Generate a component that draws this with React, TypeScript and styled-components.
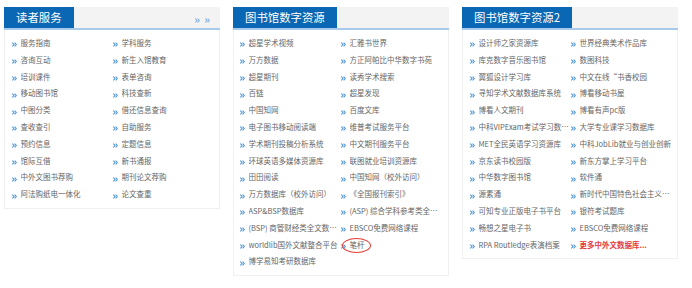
import styled, { createGlobalStyle } from 'styled-components';

const GlobalStyle = createGlobalStyle`
  html, body {
    margin: 0;
    padding: 0;
    background: #fff;
  }
  body {
    font-family: "Noto Sans CJK SC", "Noto Sans", sans-serif;
  }
`;

const Page = styled.div`
  display: flex;
  align-items: flex-start;
  gap: 13px;
  padding: 7px 0 0 4px;
`;

const Panel = styled.div`
  width: 216px;
  box-sizing: border-box;
  background: #fff;
  border: 1px solid #f0f0f0;
  border-top: none;
`;

const PanelHead = styled.div`
  display: flex;
  align-items: center;
  justify-content: space-between;
  height: 21px;
  background: #f3f3f3;
  border-bottom: 2px solid #a8cbeb;
  margin: 0 -1px;
`;

const HeadTitle = styled.div`
  height: 21px;
  line-height: 21px;
  padding: 0 12px;
  background: #0a67b3;
  color: #fff;
  font-size: 11.4px;
  white-space: nowrap;
`;

const MoreLink = styled.span`
  display: flex;
  gap: 1px;
  margin-right: 7px;
  margin-top: 2px;
`;

const List = styled.div`
  display: grid;
  grid-template-columns: 101px 101px;
  padding: 5px 0 5px ${(p: { $indent: number }) => p.$indent}px;
`;

const Item = styled.div`
  display: flex;
  align-items: center;
  height: 16.8px;
  min-width: 0;
`;

const Bullet = styled.svg`
  flex: none;
  width: 5px;
  height: 5px;
  margin: 3px 3.5px 0 0;
`;

const Label = styled.span<{ $red?: boolean }>`
  position: relative;
  min-width: 0;
  overflow: ${(p) => (p.$red === undefined ? 'hidden' : 'visible')};
  text-overflow: ellipsis;
  white-space: nowrap;
  font-size: 7.5px;
  line-height: 16.8px;
  color: ${(p) => (p.$red ? '#e4393c' : '#666')};
  font-weight: ${(p) => (p.$red ? 700 : 400)};
`;

const Circle = styled.span`
  position: absolute;
  left: -8px;
  right: -6px;
  top: 1px;
  height: 13px;
  border: 1.4px solid #e53b32;
  border-radius: 50%;
  pointer-events: none;
`;

const Arrows = ({ color = '#4c95d6' }: { color?: string }) => (
  <Bullet viewBox="0 0 5 5">
    <path d="M0.3 0.6 L2 2.5 L0.3 4.4" fill="none" stroke={color} strokeWidth="1.1" />
    <path d="M2.6 0.6 L4.3 2.5 L2.6 4.4" fill="none" stroke={color} strokeWidth="1.1" />
  </Bullet>
);

type Entry = { text: string; red?: boolean; circled?: boolean };

const readerItems: Entry[] = [
  '服务指南', '学科服务', '咨询互动', '新生入馆教育', '培训课件', '表单咨询',
  '移动图书馆', '科技查新', '中图分类', '借还信息查询', '查收查引', '自助服务',
  '预约信息', '定题信息', '馆际互借', '新书通报', '中外文图书荐购', '期刊论文荐购',
  '阿法购纸电一体化', '论文查重',
].map((text) => ({ text }));

const digitalItems: Entry[] = [
  { text: '超星学术视频' }, { text: '汇雅书世界' },
  { text: '万方数据' }, { text: '方正阿帕比中华数字书苑' },
  { text: '超星期刊' }, { text: '读秀学术搜索' },
  { text: '百链' }, { text: '超星发现' },
  { text: '中国知网' }, { text: '百度文库' },
  { text: '电子图书移动阅读端' }, { text: '维普考试服务平台' },
  { text: '学术期刊投稿分析系统' }, { text: '中文期刊服务平台' },
  { text: '环球英语多媒体资源库' }, { text: '联图就业培训资源库' },
  { text: '田田阅读' }, { text: '中国知网（校外访问）' },
  { text: '万方数据库（校外访问）' }, { text: '《全国报刊索引》' },
  { text: 'ASP&BSP数据库' }, { text: '(ASP) 综合学科参考类全文数据库' },
  { text: '(BSP) 商管财经类全文数据库' }, { text: 'EBSCO免费网络课程' },
  { text: 'worldlib国外文献整合平台' }, { text: '笔杆', circled: true },
  { text: '博学易知考研数据库' },
];

const digital2Items: Entry[] = [
  { text: '设计师之家资源库' }, { text: '世界经典美术作品库' },
  { text: '库克数字音乐图书馆' }, { text: '数图科技' },
  { text: '翼狐设计学习库' }, { text: '中文在线“书香校园' },
  { text: '寻知学术文献数据库系统' }, { text: '博看移动书屋' },
  { text: '博看人文期刊' }, { text: '博看有声pc版' },
  { text: '中科VIPExam考试学习数据库' }, { text: '大学专业课学习数据库' },
  { text: 'MET全民英语学习资源库' }, { text: '中科JobLib就业与创业创新' },
  { text: '京东读书校园版' }, { text: '新东方掌上学习平台' },
  { text: '中华数字图书馆' }, { text: '软件通' },
  { text: '源素通' }, { text: '新时代中国特色社会主义思想' },
  { text: '可知专业正版电子书平台' }, { text: '银符考试题库' },
  { text: '畅想之星电子书' }, { text: 'EBSCO免费网络课程' },
  { text: 'RPA Routledge表演档案' }, { text: '更多中外文数据库...', red: true },
];

const ResourcePanel = ({
  title,
  items,
  indent,
  more,
}: {
  title: string;
  items: Entry[];
  indent: number;
  more?: boolean;
}) => (
  <Panel>
    <PanelHead>
      <HeadTitle>{title}</HeadTitle>
      {more ? (
        <MoreLink>
          <Arrows color="#7fb0de" />
          <Arrows color="#7fb0de" />
        </MoreLink>
      ) : null}
    </PanelHead>
    <List $indent={indent}>
      {items.map((it, i) => (
        <Item key={i}>
          <Arrows />
          {it.circled ? (
            <Label $red={false}>
              {it.text}
              <Circle />
            </Label>
          ) : (
            <Label $red={it.red}>{it.text}</Label>
          )}
        </Item>
      ))}
    </List>
  </Panel>
);

export default function App() {
  return (
    <>
      <GlobalStyle />
      <Page>
        <ResourcePanel title="读者服务" items={readerItems} indent={7} more />
        <ResourcePanel title="图书馆数字资源" items={digitalItems} indent={6} />
        <ResourcePanel title="图书馆数字资源2" items={digital2Items} indent={7} />
      </Page>
    </>
  );
}
